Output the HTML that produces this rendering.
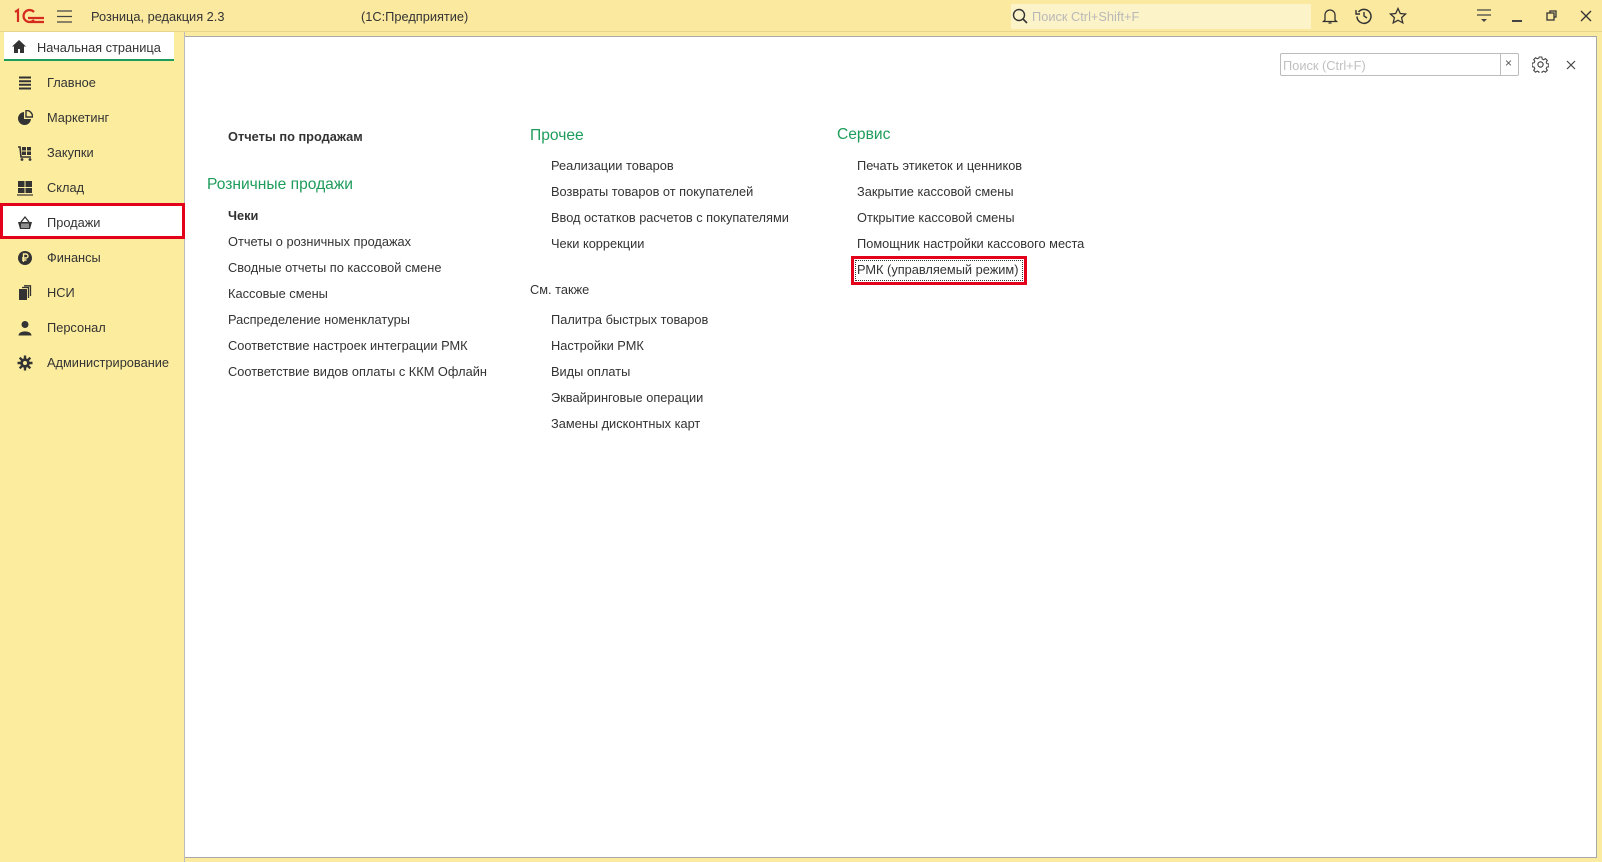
<!DOCTYPE html>
<html><head><meta charset="utf-8"><style>
*{margin:0;padding:0;box-sizing:border-box}
body{width:1602px;height:862px;overflow:hidden;background:#fbeba0;font-family:"Liberation Sans",Arial,sans-serif;font-size:12.8px;color:#333;position:relative}
.a{position:absolute;white-space:nowrap}
.top{left:0;top:0;width:1602px;height:32px;background:#fbe9a0;border-bottom:1px solid #e6d58a}
.side{left:0;top:32px;width:185px;height:830px;background:#fcec9e;border-right:1px solid #bbb}
.tab{left:4px;top:32px;width:170px;height:29px;background:#fff;border-bottom:2px solid #1c9c5c}
.panel{left:185px;top:36px;width:1412px;height:822px;background:#fff;border:1px solid #a8a8a8;border-left:none}
.si{left:47px;font-size:12.8px;color:#333;line-height:16px}
.ic{left:17px;width:16px;height:16px}
.g{color:#1e9c5a;font-size:15.6px;line-height:20px}
.it{line-height:16px}
.b{font-weight:bold}
</style></head><body>
<div class="a top"></div>
<svg class="a" style="left:13px;top:8px" width="32" height="16" viewBox="0 0 32 16"><g fill="none" stroke="#d52b1e" stroke-width="2.2"><path d="M2 4 L5 2 V14"/><path d="M21 4 A6 6 0 1 0 21 12"/><path d="M15 10 H31 M17 14 H31"/></g></svg>
<svg class="a" style="left:57px;top:10px" width="16" height="13"><path d="M0 1H15M0 6.5H15M0 12H15" stroke="#444" stroke-width="1.3"/></svg>
<div class="a" style="left:91px;top:9px;font-size:12.8px">Розница, редакция 2.3</div>
<div class="a" style="left:361px;top:9px;font-size:12.8px">(1С:Предприятие)</div>
<div class="a" style="left:1011px;top:4px;width:300px;height:25px;background:#fdf3c8"></div>
<svg class="a" style="left:1012px;top:8px" width="16" height="17"><circle cx="7" cy="7" r="5.5" fill="none" stroke="#333" stroke-width="1.4"/><path d="M11 11L15 15" stroke="#333" stroke-width="1.6"/></svg>
<div class="a" style="left:1032px;top:9px;color:#b8b8b8;font-size:12.8px">Поиск Ctrl+Shift+F</div>
<svg class="a" style="left:1321px;top:7px" width="18" height="18"><path d="M4 13V8a5 5 0 0 1 10 0v5l1.5 1.5h-13z M7.5 16h3" fill="none" stroke="#333" stroke-width="1.3"/></svg>
<svg class="a" style="left:1355px;top:7px" width="18" height="18"><path d="M3.5 5A7 7 0 1 1 2 9.5" fill="none" stroke="#333" stroke-width="1.5"/><path d="M1 3v4h4" fill="none" stroke="#333" stroke-width="1.4"/><path d="M9 5v4l3 2" fill="none" stroke="#333" stroke-width="1.4"/></svg>
<svg class="a" style="left:1389px;top:7px" width="18" height="18"><path d="M9 1.5l2.3 5 5.3.5-4 3.6 1.2 5.3L9 13.2l-4.8 2.7 1.2-5.3-4-3.6 5.3-.5z" fill="none" stroke="#333" stroke-width="1.3"/></svg>
<svg class="a" style="left:1476px;top:9px" width="16" height="15"><path d="M1 1H15M1 6H15" stroke="#444" stroke-width="1.3"/><path d="M5 10H11L8 13z" fill="#444"/></svg>
<div class="a" style="left:1512px;top:20px;width:10px;height:1.5px;background:#444"></div>
<svg class="a" style="left:1546px;top:10px" width="12" height="12"><rect x="1" y="3" width="7" height="7" fill="none" stroke="#333" stroke-width="1.3"/><path d="M4 3V1h6v6H8" fill="none" stroke="#333" stroke-width="1.3"/></svg>
<svg class="a" style="left:1580px;top:10px" width="12" height="12"><path d="M1 1L11 11M11 1L1 11" stroke="#333" stroke-width="1.3"/></svg>

<div class="a side"></div>
<div class="a tab"></div>
<svg class="a" style="left:12px;top:40px" width="14" height="13"><path d="M7 0L0 6.5h2V13h4V9h2v4h4V6.5h2z" fill="#333"/></svg>
<div class="a" style="left:37px;top:40px;font-size:12.8px">Начальная страница</div>

<div class="a" style="left:0;top:203px;width:185px;height:36px;background:#fff;border:3px solid #e3001b"></div>
<svg class="a ic" style="top:75px" viewBox="0 0 16 16"><path d="M2 2.5H14M2 6.2H14M2 9.8H14M2 13.5H14" stroke="#333" stroke-width="2"/></svg>
<div class="a si" style="top:75px">Главное</div>
<svg class="a ic" style="top:110px" viewBox="0 0 16 16"><path d="M7 2A6.5 6.5 0 1 0 14 9H7z" fill="#333"/><path d="M9 0.5A6 6 0 0 1 15.5 7H9z" fill="none" stroke="#333" stroke-width="1.4"/></svg>
<div class="a si" style="top:110px">Маркетинг</div>
<svg class="a ic" style="top:145px" viewBox="0 0 16 16"><path d="M1 2H3L4 12H14" fill="none" stroke="#333" stroke-width="1.6"/><rect x="5" y="2" width="4" height="3.5" fill="#333"/><rect x="10" y="2" width="4" height="3.5" fill="#333"/><rect x="5" y="6.5" width="4" height="3.5" fill="#333"/><rect x="10" y="6.5" width="4" height="3.5" fill="#333"/><circle cx="5" cy="14.5" r="1.4" fill="#333"/><circle cx="13" cy="14.5" r="1.4" fill="#333"/></svg>
<div class="a si" style="top:145px">Закупки</div>
<svg class="a ic" style="top:180px" viewBox="0 0 16 16"><rect x="1" y="1" width="6.5" height="6" fill="#333"/><rect x="8.5" y="1" width="6.5" height="6" fill="#333"/><rect x="1" y="8" width="6.5" height="5" fill="#333"/><rect x="8.5" y="8" width="6.5" height="5" fill="#333"/><path d="M0 15H16" stroke="#333" stroke-width="1.2"/></svg>
<div class="a si" style="top:180px">Склад</div>
<svg class="a ic" style="top:215px" viewBox="0 0 16 16"><path d="M4 7L8 2L12 7" fill="none" stroke="#333" stroke-width="1.3"/><path d="M1 7H15L13 14H3z" fill="#333"/><path d="M5 8.5V13M7 8.5V13M9 8.5V13M11 8.5V13" stroke="#fff" stroke-width="0.9"/></svg>
<div class="a si" style="top:215px">Продажи</div>
<svg class="a ic" style="top:250px" viewBox="0 0 16 16"><circle cx="8" cy="8" r="7" fill="#333"/><path d="M6.5 12V4H9a2 2 0 0 1 0 4H5M5 10H9.5" fill="none" stroke="#fcec9e" stroke-width="1.4"/></svg>
<div class="a si" style="top:250px">Финансы</div>
<svg class="a ic" style="top:285px" viewBox="0 0 16 16"><rect x="2" y="4" width="8" height="11" fill="#333"/><path d="M11.5 13V2.5H5M13.5 11V0.8H7" fill="none" stroke="#333" stroke-width="1.3"/></svg>
<div class="a si" style="top:285px">НСИ</div>
<svg class="a ic" style="top:320px" viewBox="0 0 16 16"><circle cx="8" cy="4.5" r="3.5" fill="#333"/><path d="M1.5 15.5C1.5 10 14.5 10 14.5 15.5z" fill="#333"/></svg>
<div class="a si" style="top:320px">Персонал</div>
<svg class="a ic" style="top:355px" viewBox="0 0 16 16"><g stroke="#333" stroke-width="2.4"><path d="M8 0.5V15.5M0.5 8H15.5M2.7 2.7L13.3 13.3M13.3 2.7L2.7 13.3"/></g><circle cx="8" cy="8" r="4.8" fill="#333"/><circle cx="8" cy="8" r="2" fill="#fcec9e"/></svg>
<div class="a si" style="top:355px">Администрирование</div>

<div class="a panel"></div>
<div class="a" style="left:1280px;top:53px;width:239px;height:23px;border:1px solid #bcbcbc;border-radius:2px;background:#fff"></div>
<div class="a" style="left:1500px;top:53px;width:1px;height:23px;background:#bcbcbc"></div>
<div class="a" style="left:1283px;top:58px;color:#c0c0c0;font-size:12.8px">Поиск (Ctrl+F)</div>
<div class="a" style="left:1505px;top:56px;color:#555;font-size:12px">×</div>
<svg class="a" style="left:1532px;top:56px" width="17" height="17" viewBox="0 0 17 17"><circle cx="8.5" cy="8.5" r="2.6" fill="none" stroke="#444" stroke-width="1.2"/><path d="M7.2 1h2.6l.4 2 1.5.7 1.7-1.1 1.9 1.9-1.1 1.7.7 1.5 2 .4v2.6l-2 .4-.7 1.5 1.1 1.7-1.9 1.9-1.7-1.1-1.5.7-.4 2H7.2l-.4-2-1.5-.7-1.7 1.1-1.9-1.9 1.1-1.7-.7-1.5-2-.4V7.2l2-.4.7-1.5-1.1-1.7 1.9-1.9 1.7 1.1 1.5-.7z" fill="none" stroke="#444" stroke-width="1.1"/></svg>
<svg class="a" style="left:1566px;top:60px" width="10" height="10"><path d="M1 1L9 9M9 1L1 9" stroke="#444" stroke-width="1.2"/></svg>

<div class="a it b" style="left:228px;top:129px">Отчеты по продажам</div>
<div class="a g" style="left:207px;top:175px">Розничные продажи</div>
<div class="a it b" style="left:228px;top:208px">Чеки</div>
<div class="a it" style="left:228px;top:234px">Отчеты о розничных продажах</div>
<div class="a it" style="left:228px;top:260px">Сводные отчеты по кассовой смене</div>
<div class="a it" style="left:228px;top:286px">Кассовые смены</div>
<div class="a it" style="left:228px;top:312px">Распределение номенклатуры</div>
<div class="a it" style="left:228px;top:338px">Соответствие настроек интеграции РМК</div>
<div class="a it" style="left:228px;top:364px">Соответствие видов оплаты с ККМ Офлайн</div>

<div class="a g" style="left:530px;top:126px">Прочее</div>
<div class="a it" style="left:551px;top:158px">Реализации товаров</div>
<div class="a it" style="left:551px;top:184px">Возвраты товаров от покупателей</div>
<div class="a it" style="left:551px;top:210px">Ввод остатков расчетов с покупателями</div>
<div class="a it" style="left:551px;top:236px">Чеки коррекции</div>
<div class="a it" style="left:530px;top:282px">См. также</div>
<div class="a it" style="left:551px;top:312px">Палитра быстрых товаров</div>
<div class="a it" style="left:551px;top:338px">Настройки РМК</div>
<div class="a it" style="left:551px;top:364px">Виды оплаты</div>
<div class="a it" style="left:551px;top:390px">Эквайринговые операции</div>
<div class="a it" style="left:551px;top:416px">Замены дисконтных карт</div>

<div class="a g" style="left:837px;top:125px">Сервис</div>
<div class="a it" style="left:857px;top:158px">Печать этикеток и ценников</div>
<div class="a it" style="left:857px;top:184px">Закрытие кассовой смены</div>
<div class="a it" style="left:857px;top:210px">Открытие кассовой смены</div>
<div class="a it" style="left:857px;top:236px">Помощник настройки кассового места</div>
<div class="a" style="left:851px;top:256px;width:176px;height:29px;border:3px solid #e3001b"></div>
<div class="a" style="left:855px;top:260px;width:168px;height:21px;border:1px dotted #333"></div>
<div class="a it" style="left:857px;top:262px">РМК (управляемый режим)</div>
</body></html>
